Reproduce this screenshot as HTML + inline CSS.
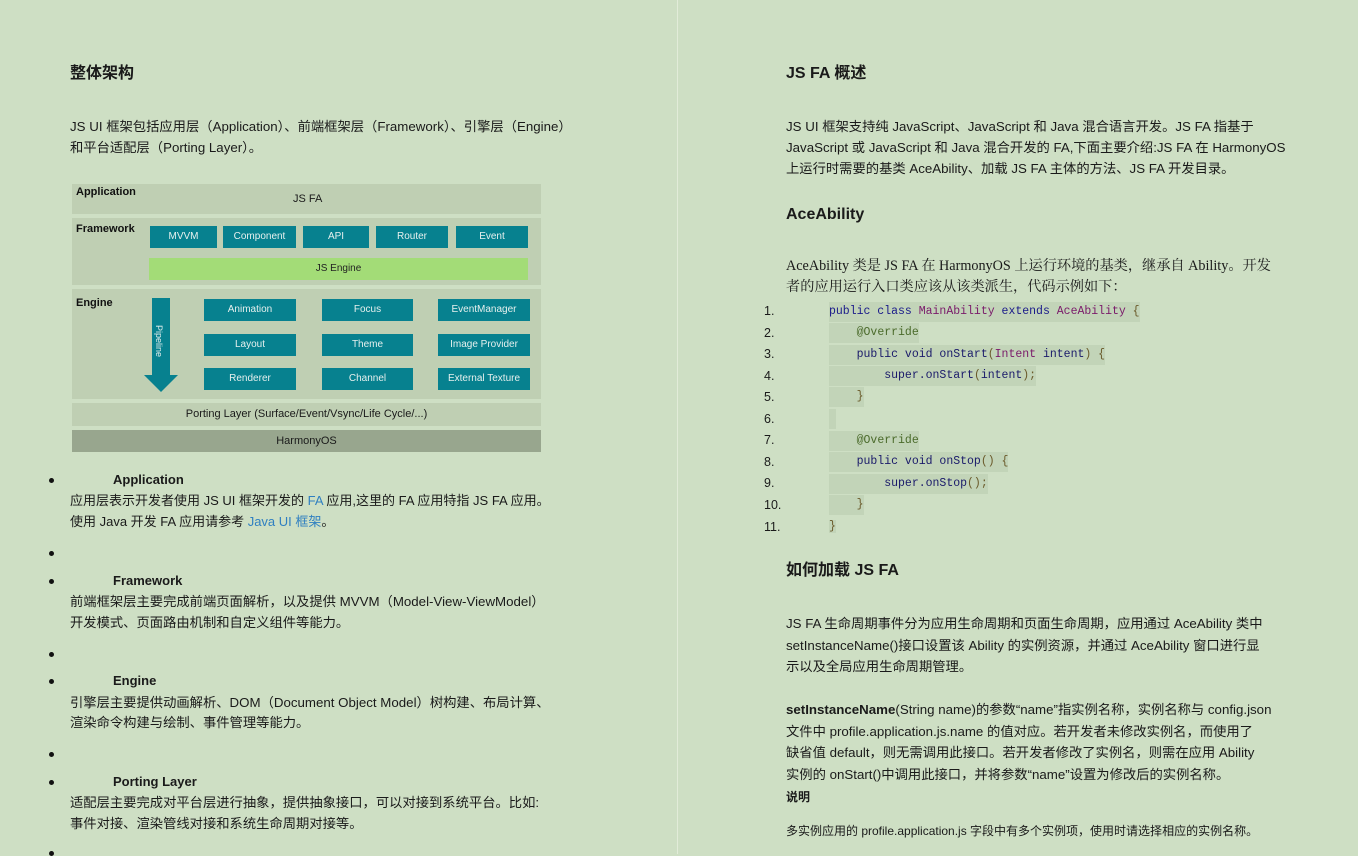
<!DOCTYPE html>
<html><head><meta charset="utf-8"><style>
*{margin:0;padding:0;box-sizing:border-box}
body{width:1358px;height:854px;background:#cedfc4;position:relative;overflow:hidden;font-family:"Liberation Sans","Noto Sans CJK SC",sans-serif;color:#1a1a1a;font-size:13px}
.t{position:absolute;white-space:nowrap;line-height:21px}
.r{font-size:13.3px}
.h{font-weight:bold;font-size:16px}
.b{font-weight:bold}
.dot{position:absolute;left:49px;width:5px;height:5px;border-radius:50%;background:#111}
.a{color:#2f7fc1}
.div{position:absolute;left:677px;top:0;width:1px;height:854px;background:#e2ecd9}
.row{position:absolute;left:72px;width:469px;background:#bfcfb3}
.bx{position:absolute;background:#07818f;color:#e6f0ee;font-size:10px;text-align:center;line-height:21px;height:22px}
.lab{position:absolute;font-size:11px;font-weight:bold;color:#111}
.code{position:absolute;left:829px;font-family:"Liberation Mono",monospace;font-size:11.5px;line-height:20px;background:#c2d4b8;white-space:pre;color:#1a1a6a}
.num{position:absolute;left:764px;font-size:12.5px;line-height:20px}
.k{color:#1a1a8a}.c{color:#7a1a6a}.an{color:#4a6a2a}.p{color:#6a5a2a}
.ser{font-family:"Liberation Serif","Noto Serif CJK SC",serif;font-size:14.2px}
</style></head><body>
<div class="div"></div>

<div class="t h" style="left:70px;top:63px">整体架构</div>
<div class="t" style="left:70px;top:116px;font-size:13.3px">JS UI 框架包括应用层（Application）、前端框架层（Framework）、引擎层（Engine）</div>
<div class="t" style="left:70px;top:137px;font-size:13.3px">和平台适配层（Porting Layer）。</div>

<div class="row" style="top:184px;height:30px"></div>
<div class="lab" style="left:76px;top:186px">Application</div>
<div class="t" style="left:293px;top:189px;font-size:11px">JS FA</div>
<div class="row" style="top:218px;height:67px"></div>
<div class="lab" style="left:76px;top:223px">Framework</div>
<div class="bx" style="left:150px;top:226px;width:67px">MVVM</div>
<div class="bx" style="left:223px;top:226px;width:73px">Component</div>
<div class="bx" style="left:303px;top:226px;width:66px">API</div>
<div class="bx" style="left:376px;top:226px;width:72px">Router</div>
<div class="bx" style="left:456px;top:226px;width:72px">Event</div>
<div class="bx" style="left:149px;top:258px;width:379px;background:#a3dc77;color:#222">JS Engine</div>
<div class="row" style="top:289px;height:110px"></div>
<div class="lab" style="left:76px;top:297px">Engine</div>
<svg style="position:absolute;left:144px;top:297px" width="36" height="96"><polygon points="8,1 26,1 26,78 34,78 17,95 0,78 8,78" fill="#07818f"/><text x="0" y="0" transform="translate(12,28) rotate(90)" font-size="9" fill="#e6f0ee" font-family="Liberation Sans">Pipeline</text></svg>
<div class="bx" style="left:204px;top:299px;width:92px">Animation</div>
<div class="bx" style="left:322px;top:299px;width:91px">Focus</div>
<div class="bx" style="left:438px;top:299px;width:92px">EventManager</div>
<div class="bx" style="left:204px;top:334px;width:92px">Layout</div>
<div class="bx" style="left:322px;top:334px;width:91px">Theme</div>
<div class="bx" style="left:438px;top:334px;width:92px">Image Provider</div>
<div class="bx" style="left:204px;top:368px;width:92px">Renderer</div>
<div class="bx" style="left:322px;top:368px;width:91px">Channel</div>
<div class="bx" style="left:438px;top:368px;width:92px">External Texture</div>
<div class="row" style="top:403px;height:23px;text-align:center;font-size:11px;line-height:23px">Porting Layer (Surface/Event/Vsync/Life Cycle/...)</div>
<div class="row" style="top:430px;height:22px;background:#98a68e;text-align:center;font-size:11px;line-height:22px">HarmonyOS</div>

<div class="dot" style="top:478px"></div>
<div class="t b" style="left:113px;top:469px">Application</div>
<div class="t" style="left:70px;top:490px">应用层表示开发者使用 JS UI 框架开发的 <span class="a">FA</span> 应用,这里的 FA 应用特指 JS FA 应用。</div>
<div class="t" style="left:70px;top:511px">使用 Java 开发 FA 应用请参考 <span class="a">Java UI 框架</span>。</div>
<div class="dot" style="top:551px"></div>
<div class="dot" style="top:579px"></div>
<div class="t b" style="left:113px;top:570px">Framework</div>
<div class="t" style="left:70px;top:591px;font-size:13.3px">前端框架层主要完成前端页面解析，以及提供 MVVM（Model-View-ViewModel）</div>
<div class="t" style="left:70px;top:612px;font-size:13.3px">开发模式、页面路由机制和自定义组件等能力。</div>
<div class="dot" style="top:652px"></div>
<div class="dot" style="top:679px"></div>
<div class="t b" style="left:113px;top:670px">Engine</div>
<div class="t" style="left:70px;top:692px;font-size:13.3px">引擎层主要提供动画解析、DOM（Document Object Model）树构建、布局计算、</div>
<div class="t" style="left:70px;top:712px;font-size:13.3px">渲染命令构建与绘制、事件管理等能力。</div>
<div class="dot" style="top:752px"></div>
<div class="dot" style="top:780px"></div>
<div class="t b" style="left:113px;top:771px">Porting Layer</div>
<div class="t" style="left:70px;top:792px;font-size:13.3px">适配层主要完成对平台层进行抽象，提供抽象接口，可以对接到系统平台。比如:</div>
<div class="t" style="left:70px;top:813px;font-size:13.3px">事件对接、渲染管线对接和系统生命周期对接等。</div>
<div class="dot" style="top:851px"></div>

<div class="t h" style="left:786px;top:63px">JS FA 概述</div>
<div class="t r" style="left:786px;top:116px">JS UI 框架支持纯 JavaScript、JavaScript 和 Java 混合语言开发。JS FA 指基于</div>
<div class="t r" style="left:786px;top:137px">JavaScript 或 JavaScript 和 Java 混合开发的 FA,下面主要介绍:JS FA 在 HarmonyOS</div>
<div class="t r" style="left:786px;top:158px">上运行时需要的基类 AceAbility、加载 JS FA 主体的方法、JS FA 开发目录。</div>
<div class="t h" style="left:786px;top:204px">AceAbility</div>
<div class="t ser" style="left:786px;top:256px">AceAbility 类是 JS FA 在 HarmonyOS 上运行环境的基类，继承自 Ability。开发</div>
<div class="t ser" style="left:786px;top:277px">者的应用运行入口类应该从该类派生，代码示例如下：</div>

<div class="num" style="top:301px">1.</div><div class="code" style="top:302px"><span class="k">public class </span><span class="c">MainAbility</span><span class="k"> extends </span><span class="c">AceAbility</span><span class="p"> {</span></div>
<div class="num" style="top:323px">2.</div><div class="code" style="top:323px">    <span class="an">@Override</span></div>
<div class="num" style="top:344px">3.</div><div class="code" style="top:345px">    public void onStart<span class="p">(</span><span class="c">Intent</span> intent<span class="p">) {</span></div>
<div class="num" style="top:366px">4.</div><div class="code" style="top:366px">        super.onStart<span class="p">(</span>intent<span class="p">);</span></div>
<div class="num" style="top:387px">5.</div><div class="code" style="top:387px">    <span class="p">}</span></div>
<div class="num" style="top:409px">6.</div><div class="code" style="top:409px;width:7px"> </div>
<div class="num" style="top:430px">7.</div><div class="code" style="top:431px">    <span class="an">@Override</span></div>
<div class="num" style="top:452px">8.</div><div class="code" style="top:452px">    public void onStop<span class="p">() {</span></div>
<div class="num" style="top:473px">9.</div><div class="code" style="top:474px">        super.onStop<span class="p">();</span></div>
<div class="num" style="top:495px">10.</div><div class="code" style="top:495px">    <span class="p">}</span></div>
<div class="num" style="top:517px">11.</div><div class="code" style="top:517px;background:none"><span style="background:#c2d4b8" class="p">}</span></div>

<div class="t h" style="left:786px;top:560px">如何加载 JS FA</div>
<div class="t r" style="left:786px;top:613px">JS FA 生命周期事件分为应用生命周期和页面生命周期，应用通过 AceAbility 类中</div>
<div class="t r" style="left:786px;top:635px">setInstanceName()接口设置该 Ability 的实例资源，并通过 AceAbility 窗口进行显</div>
<div class="t r" style="left:786px;top:656px">示以及全局应用生命周期管理。</div>
<div class="t r" style="left:786px;top:699px"><b>setInstanceName</b>(String name)的参数“name”指实例名称，实例名称与 config.json</div>
<div class="t r" style="left:786px;top:721px">文件中 profile.application.js.name 的值对应。若开发者未修改实例名，而使用了</div>
<div class="t r" style="left:786px;top:742px">缺省值 default，则无需调用此接口。若开发者修改了实例名，则需在应用 Ability</div>
<div class="t r" style="left:786px;top:764px">实例的 onStart()中调用此接口，并将参数“name”设置为修改后的实例名称。</div>
<div class="t b" style="left:786px;top:787px;font-size:12px">说明</div>
<div class="t" style="left:786px;top:821px;font-size:12px">多实例应用的 profile.application.js 字段中有多个实例项，使用时请选择相应的实例名称。</div>
</body></html>
